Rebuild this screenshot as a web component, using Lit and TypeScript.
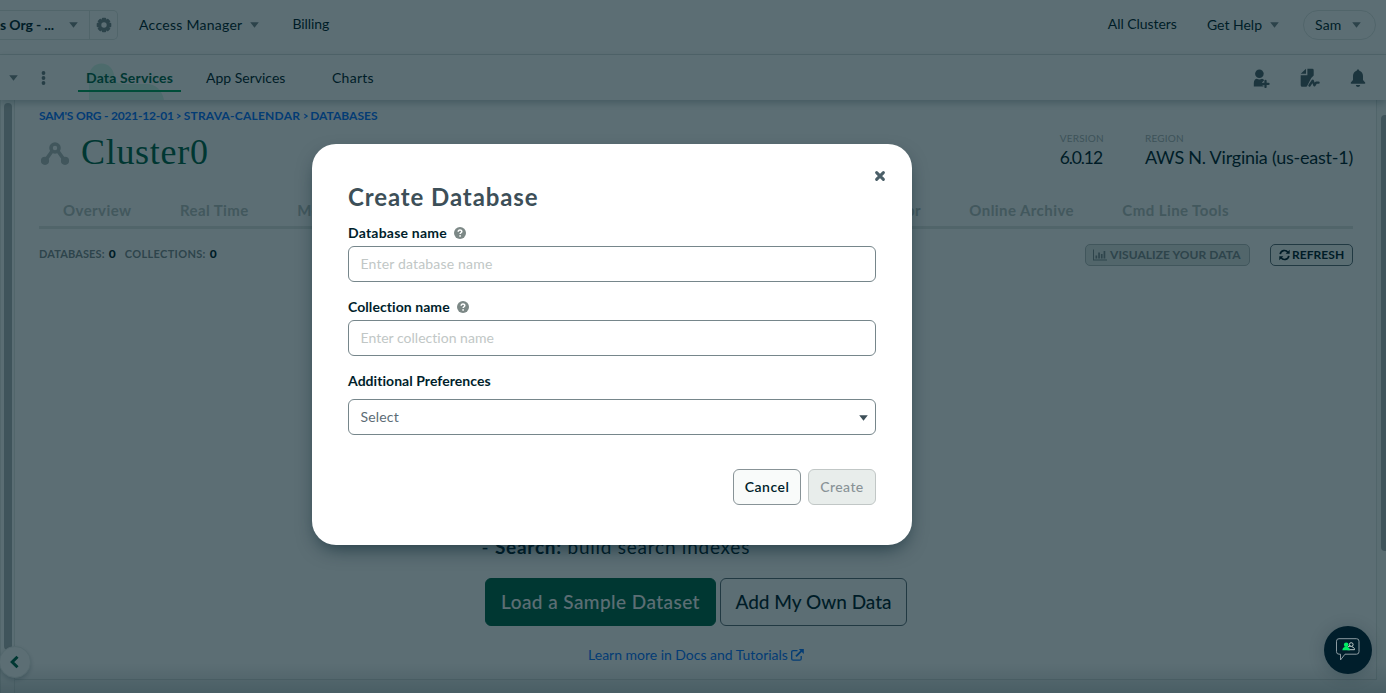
import { LitElement, html, css, svg } from "lit";
import { customElement, state } from "lit/decorators.js";

const caret = html`<svg class="caret" width="9" height="6" viewBox="0 0 9 6"><path d="M.2.2h8.6L4.5 5.8z" fill="currentColor"/></svg>`;

const gear = html`<svg width="16" height="16" viewBox="0 0 16 16" fill="#7a878c"><g transform="translate(8 8)">${[0, 45, 90, 135].map(
  (a) => svg`<rect x="-2.2" y="-7.3" width="4.4" height="14.6" rx="1" transform="rotate(${a})"/>`
)}<circle r="5.8"/><circle r="2.7" fill="#fff"/></g></svg>`;

const cluster = html`<svg width="30" height="24" viewBox="0 0 30 24" fill="none" stroke="#b3bcbc"><circle cx="15" cy="6" r="4" stroke-width="3.6"/><path d="M12.5 8.5 5 19M17.5 8.5 25 19" stroke-width="3.6"/><circle cx="5" cy="18.8" r="4.1" fill="#b3bcbc" stroke="none"/><circle cx="25" cy="18.8" r="4.1" fill="#b3bcbc" stroke="none"/></svg>`;

const help = html`<svg width="12" height="12" viewBox="0 0 12 12"><circle cx="6" cy="6" r="6" fill="#7c8886"/><path d="M4.200 4.700C4.200 2.300 7.800 2.400 7.800 4.500 7.800 5.800 6.100 5.700 6.100 7.100" fill="none" stroke="#fff" stroke-width="1.500"/><rect x="5.300" y="8.200" width="1.600" height="1.500" fill="#fff"/></svg>`;

const personPlus = html`<svg width="17" height="19" viewBox="0 0 17 19" fill="#4f626a"><circle cx="6.400" cy="4.800" r="4.300"/><path d="M.8 17.600V14c0-2.800 1.700-4.300 3-4.300 1.500 1 3.700 1 5.200 0 .9.1 1.700.7 2.200 1.600L9 13.500v2.800h1.500v1.300z"/><path d="M12.500 11.900v6M9.500 14.900h6" stroke="#4f626a" stroke-width="2.300" stroke-linecap="round"/></svg>`;

const fileActivity = html`<svg width="20" height="20" viewBox="0 0 20 20" fill="#4f626a"><path d="M6 .8v4.900H.7z"/><path d="M7.400.8h4.900q1.400 0 1.400 1.400v5.400l-2.500 2.500-3.800 7.300q-.4 1.400-1.500 1.400H2.200q-1.500 0-1.500-1.500V7.200h6.700z"/><path d="m9.500 17.500 3.200-4.800 1.700 4.600 1.700-2.600h2.500" fill="none" stroke="#4f626a" stroke-width="2.300" stroke-linejoin="round" stroke-linecap="round"/></svg>`;

const bell = html`<svg width="16" height="19" viewBox="0 0 16 19" fill="#4f626a"><path d="M8 .5c.9 0 1.300.5 1.300 1.300C11.800 2.500 13 4.600 13 7v4l2.200 2.400q.5 1.100-.8 1.300H1.600Q.300 14.500.8 13.400L3 11V7c0-2.400 1.200-4.500 3.700-5.200C6.700 1 7.100.5 8 .5zM5.800 16h4.400q-.3 1.900-2.200 1.900T5.800 16z"/></svg>`;

const chart = html`<svg width="14" height="12" viewBox="0 0 14 12" fill="currentColor"><path d="M0 .5h1v10h13v1H0zM2.500 6.500h1.700v3H2.500zM5.200 3.500h1.700v6H5.200zM7.900 5h1.700v4.500H7.900zM10.600 2h1.700v7.500h-1.700z"/></svg>`;

const refresh = html`<svg width="11" height="12" viewBox="0 0 11 12" fill="none" stroke="currentColor" stroke-width="1.700"><path d="M1.200 5.200A4.300 4.300 0 0 1 9 3.400M9.800 6.800A4.300 4.300 0 0 1 2 8.600"/><path d="M10.700.8v4H6.700zM.3 11.200v-4h4z" fill="currentColor" stroke="none"/></svg>`;

const external = html`<svg width="13" height="12" viewBox="0 0 13 12" fill="none" stroke="currentColor" stroke-width="1.300"><path d="M6.500 1.700H2.200Q.7 1.700.7 3.200v6.500q0 1.500 1.500 1.500h6.500q1.500 0 1.500-1.500V7"/><path d="m5 7.300 5.500-5.500" stroke-width="1.900"/><path d="M7.800.1h5v5z" fill="currentColor" stroke="none"/></svg>`;

const cross = html`<svg width="12" height="12" viewBox="0 0 12 12"><path d="m2.600 2.600 6.800 6.800M9.400 2.600 2.600 9.400" stroke="#4b5f68" stroke-width="3" stroke-linecap="round"/></svg>`;

const chat = html`<svg width="26" height="24" viewBox="0 0 26 24" fill="none"><path d="M4 .7h17.500q2.500 0 2.500 2.500v10.500q0 2.500-2.500 2.500H10L5.500 22v-5.800H4q-2.500 0-2.500-2.500V3.200Q1.500.7 4 .7z" stroke="#8b9aa0" stroke-width="1"/><path d="M12.500 11.700h7c0-2-1.200-2.500-2.700-2.900M13 8.500c2 .2 2.500-.8 2.500-.8" stroke="#c1ccc9"/><circle cx="16.200" cy="6.600" r="1.900" stroke="#c1ccc9"/><circle cx="11.200" cy="6.700" r="2.300" fill="#00ed64"/><path d="M7.300 12.200q0-2.700 2.700-3.400h2.500q2.500.7 2.500 3.400z" fill="#00ed64"/></svg>`;

@customElement("app-root")
export class AppRoot extends LitElement {
  @state() private open = true;

  static styles = css`
    :host { display: block; position: relative; height: 693px; overflow: hidden; background: #fff; color: #001e2b; font: 14px/20px Lato, sans-serif; }
    * { box-sizing: border-box; }
    svg { display: block; flex: none; }
    button, input { font: inherit; letter-spacing: inherit; margin: 0; }
    .page { display: flex; flex-direction: column; height: 693px; }
    .top { display: flex; align-items: center; height: 55px; padding: 0 10px 5px 0; border-bottom: 1px solid #dfe5e3; flex: none; }
    .caret { color: #7a878c; }
    .org { display: flex; align-items: center; height: 30px; width: 118px; border: 1px solid #dfe5e3; border-left: 0; border-radius: 0 5px 5px 0; font-weight: 700; letter-spacing: -.12px; white-space: pre; }
    .org .name { width: 69px; padding-top: 1px; }
    .org .gear { margin-left: auto; width: 28px; height: 28px; border-left: 1px solid #dfe5e3; display: grid; place-items: center; }
    .link { display: flex; align-items: center; gap: 8px; white-space: nowrap; }
    .access { margin-left: 21px; letter-spacing: .27px; padding-top: 1px; }
    .billing { margin-left: 33px; letter-spacing: -.1px; margin-top: -1px; }
    .all { margin-left: auto; letter-spacing: -.05px; margin-top: -1px; }
    .get { margin-left: 30px; padding-top: 1px; }
    .user { margin-left: 24px; width: 73px; height: 30px; border: 1px solid #dfe5e3; border-radius: 15px; padding: 1px 14px 0 11px; justify-content: space-between; letter-spacing: .15px; }
    .sub { display: flex; align-items: center; height: 45px; padding: 1px 20px 0 9px; flex: none; position: relative; z-index: 1; box-shadow: 0 3px 7px rgba(0,30,43,.25); background: #fff; }
    .dots { margin-left: 23px; }
    .blob { position: absolute; left: 89px; top: 7px; }
    .tab { position: relative; white-space: nowrap; }
    .active { margin-left: 32px; width: 103px; height: 27px; padding: 5px 0 0 8px; font-weight: 700; color: #00684a; letter-spacing: .17px; border-bottom: 2px solid #00a35c; line-height: 16px; }
    .app { margin-left: 25px; }
    .charts { margin-left: 46.500px; letter-spacing: .3px; }
    .icons { margin-left: auto; display: flex; align-items: center; gap: 30px; }
    .body { display: flex; flex: 1; min-height: 0; background: #f9fbfa; }
    .side { width: 15px; border: solid #e3e8e6; border-width: 0 1px; padding: 3px 2px 43px 3px; background: #fafcfb; }
    .thumb { background: #b0b7b9; border-radius: 4px; width: 8px; height: 100%; }
    .right { width: 9px; padding: 15px 0 0 4px; }
    .right .thumb { height: 436px; }
    .main { flex: 1; min-width: 0; display: flex; flex-direction: column; height: 580px; padding: 6px 24px 0; background: #fff; border: solid #dfe5e3; border-width: 0 1px 1px 0; }
    .crumbs { display: flex; gap: 2.500px; font-size: 12px; font-weight: 700; color: #0a74ff; letter-spacing: .02px; white-space: pre; }
    .crumbs .home { letter-spacing: -.2px; }
    .crumbs .gt { width: 5px; transform: scaleX(.75); transform-origin: left; }
    .crumbs .proj { letter-spacing: .22px; }
    .title { display: flex; align-items: center; height: 52px; }
    .title svg { margin: 4px 0 0 1px; }
    h1 { margin: 0 0 0 11px; font: 400 36px/44px "Liberation Serif", serif; letter-spacing: .7px; color: #00684a; }
    .facts { margin-left: auto; margin-right: -1px; display: flex; gap: 41px; }
    .facts > div { margin-top: -4px; }
    .label { font-size: 10px; line-height: 14px; color: #aab3b4; letter-spacing: .22px; }
    .value { font-size: 18px; line-height: 25px; letter-spacing: -.23px; white-space: nowrap; }
    .version { font-size: 17.5px; letter-spacing: -1.100px; }
    .tabs { display: flex; gap: 48.4px; height: 51px; padding: 22px 124px 0 24px; border-bottom: 3px solid #dfe5e3; font-size: 15px; font-weight: 700; color: #b8c1c0; letter-spacing: .43px; white-space: nowrap; }
    .push { margin-left: auto; }
    .content { display: flex; flex-direction: column; flex: 1; margin-right: -1px; }
    .stats { display: flex; align-items: center; height: 50px; font-size: 11px; font-weight: 700; color: #7f8b8f; letter-spacing: .12px; }
    .stats b { color: #001e2b; margin: 0 9px 0 4px; font-size: 12px; }
    .coll { letter-spacing: .34px; }
    .small { height: 22px; margin-top: 1px; display: flex; align-items: center; gap: 3px; padding: 0 7px; border: 1px solid #889397; border-radius: 5px; background: #f9fbfa; font-size: 12px; font-weight: 700; letter-spacing: .06px; color: #001e2b; white-space: nowrap; }
    .viz { margin-left: auto; width: 165px; background: #e3e8e6; border-color: #b3bcbc; color: #7f8b8f; }
    .ref { margin-left: 20px; width: 83px; padding-left: 8px; gap: 2px; border-color: #5c6c75; }
    .empty { flex: 1; display: flex; flex-direction: column; align-items: center; justify-content: flex-end; padding-bottom: 14px; }
    .hint { width: 429px; font-size: 19px; line-height: 28px; letter-spacing: .75px; margin-bottom: 17px; white-space: nowrap; }
    .actions { display: flex; gap: 4px; margin-bottom: 19px; }
    .big { height: 48px; width: 187px; padding: 0; border: 1px solid #5c6c75; border-radius: 6px; background: #fff; color: #001e2b; font-size: 19px; font-weight: 500; letter-spacing: 0; }
    .primary { width: 231px; background: #00684a; border-color: #00684a; color: #fff; letter-spacing: .43px; }
    .learn { display: flex; align-items: center; gap: 3px; font-size: 14px; color: #0a74ff; letter-spacing: -.02px; }
    .foot { position: absolute; left: 0; right: 0; bottom: 0; height: 30px; background: linear-gradient(transparent, rgba(0,30,43,.18)); }
    .collapse { position: absolute; left: -1px; top: 646px; width: 32px; height: 32px; border-radius: 16px; background: #fff; border: 1px solid #e8edeb; box-shadow: 0 2px 4px rgba(0,30,43,.2); display: grid; place-items: center; }
    .scrim { position: absolute; z-index: 2; inset: 0; background: rgba(0,28,37,.64); padding: 144px 0 0 312px; }
    .dialog { position: relative; width: 600px; height: 401px; background: #fff; border-radius: 24px; padding: 38px 36px 0; box-shadow: 0 8px 20px -6px rgba(0,30,43,.7); font-size: 14px; }
    .close { position: absolute; right: 26px; top: 26px; padding: 0; border: 0; background: none; }
    h2 { margin: 0 0 12px; font: 700 24px/30px Lato, sans-serif; letter-spacing: .9px; color: #3d4f58; }
    .field { display: flex; align-items: center; gap: 7px; height: 18px; margin-bottom: 4px; font-weight: 700; letter-spacing: .22px; }
    .coln { letter-spacing: .07px; }
    .addl { margin-bottom: 9px; letter-spacing: .05px; }
    .input { display: flex; align-items: center; width: 528px; height: 36px; margin-bottom: 16px; padding: 0 12px 1px 11.500px; border: 1px solid #76868b; border-radius: 6px; background: #fff; color: #5c6c75; letter-spacing: .18px; }
    .input.short { letter-spacing: .02px; }
    .input::placeholder { color: #c1c7c6; opacity: 1; }
    .select { justify-content: space-between; padding: 0 7px 0 11.500px; margin-bottom: 34px; }
    .select .caret { color: #3d4f58; margin-top: 1px; }
    .row { display: flex; justify-content: flex-end; gap: 7px; }
    .btn { width: 68px; height: 36px; padding: 0; border: 1px solid #889397; border-radius: 6px; background: #f9fbfa; color: #001e2b; font-weight: 600; letter-spacing: .5px; }
    .btn:disabled { background: #e8edeb; border-color: #c1c7c6; color: #889397; font-weight: 500; letter-spacing: .4px; }
    .chat { position: absolute; z-index: 3; left: 1324px; top: 626px; width: 48px; height: 48px; border-radius: 24px; background: #001e2b; display: grid; place-items: center; box-shadow: 0 2px 16px rgba(0,30,43,.22); }
  `;

  private dialog() {
    return html`<div class="scrim"><div class="dialog">
      <button class="close" @click=${() => (this.open = false)}>${cross}</button>
      <h2>Create Database</h2>
      <div class="field">Database name ${help}</div>
      <input class="input" placeholder="Enter database name">
      <div class="field coln">Collection name ${help}</div>
      <input class="input short" placeholder="Enter collection name">
      <div class="field addl">Additional Preferences</div>
      <div class="input select"><span>Select</span>${caret}</div>
      <div class="row"><button class="btn">Cancel</button><button class="btn" disabled>Create</button></div>
    </div></div>`;
  }

  render() {
    return html`<div class="page">
      <div class="top">
        <div class="org"><span class="name">s Org - ...</span>${caret}<span class="gear">${gear}</span></div>
        <span class="link access">Access Manager ${caret}</span>
        <span class="link billing">Billing</span>
        <span class="link all">All Clusters</span>
        <span class="link get">Get Help ${caret}</span>
        <span class="link user">Sam ${caret}</span>
      </div>
      <div class="sub">
        ${caret}
        <svg class="dots" width="5" height="14" viewBox="0 0 5 14" fill="#6b7a80"><circle cx="2.500" cy="2" r="1.900"/><circle cx="2.500" cy="7" r="1.900"/><circle cx="2.500" cy="12" r="1.900"/></svg>
        <svg class="blob" width="76" height="38" viewBox="0 0 76 38" fill="#c3f4e0"><path d="M0 38V14A12.500 12.500 0 0 1 25 14Q25 21 34 22H60Q72 24 75 38z" opacity=".7"/></svg>
        <span class="tab active">Data Services</span>
        <span class="tab app">App Services</span>
        <span class="tab charts">Charts</span>
        <div class="icons">${personPlus}${fileActivity}${bell}</div>
      </div>
      <div class="body">
        <div class="side"><div class="thumb"></div></div>
        <div class="main">
          <div class="crumbs"><span class="home">SAM'S ORG - 2021-12-01</span><span class="gt">&gt;</span><span class="proj">STRAVA-CALENDAR</span><span class="gt">&gt;</span><span>DATABASES</span></div>
          <div class="title">${cluster}<h1>Cluster0</h1>
            <div class="facts">
              <div><div class="label">VERSION</div><div class="value version">6.0.12</div></div>
              <div><div class="label">REGION</div><div class="value">AWS N. Virginia (us-east-1)</div></div>
            </div>
          </div>
          <div class="content">
            <div class="tabs"><span>Overview</span><span>Real Time</span><span>Metrics</span><span class="push">Performance Advisor</span><span>Online Archive</span><span>Cmd Line Tools</span></div>
            <div class="stats"><span>DATABASES:</span><b>0</b><span class="coll">COLLECTIONS:</span><b>0</b>
              <button class="small viz">${chart}VISUALIZE YOUR DATA</button><button class="small ref">${refresh}REFRESH</button></div>
            <div class="empty">
              <div class="hint">- <b>Search:</b> build search indexes</div>
              <div class="actions"><button class="big primary">Load a Sample Dataset</button><button class="big">Add My Own Data</button></div>
              <div class="learn">Learn more in Docs and Tutorials ${external}</div>
            </div>
          </div>
        </div>
        <div class="right"><div class="thumb"></div></div>
      </div>
      <div class="foot"></div>
      <div class="collapse"><svg width="12" height="14" viewBox="0 0 12 14"><path d="M8.500 1.800 3.200 7l5.300 5.200" fill="none" stroke="#00684a" stroke-width="3"/></svg></div>
    </div>
    ${this.open ? this.dialog() : null}
    <div class="chat">${chat}</div>`;
  }
}
